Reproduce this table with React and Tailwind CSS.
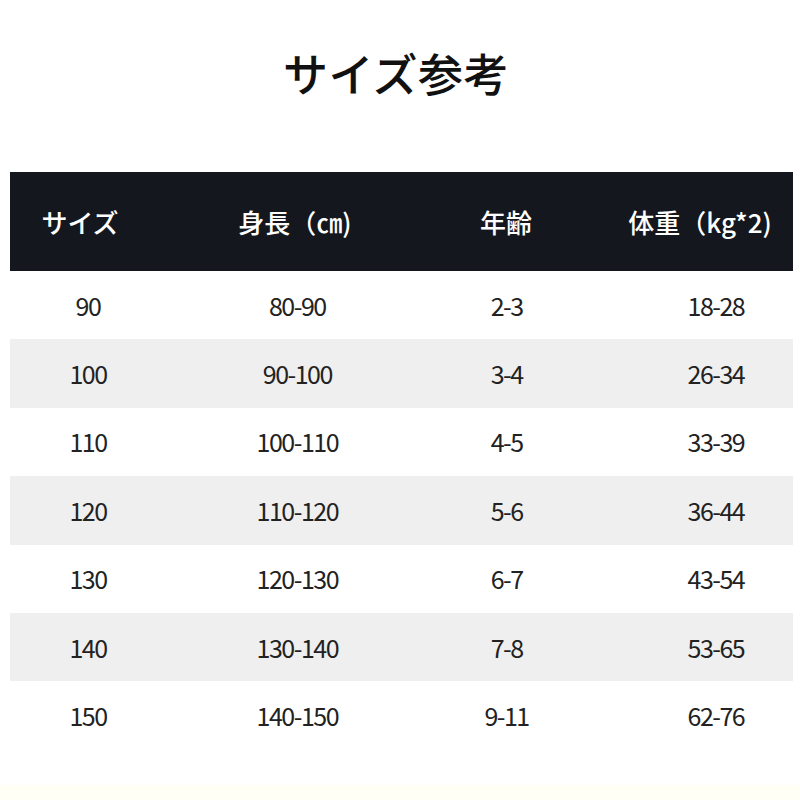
const rows = [
  ["90", "80-90", "2-3", "18-28"],
  ["100", "90-100", "3-4", "26-34"],
  ["110", "100-110", "4-5", "33-39"],
  ["120", "110-120", "5-6", "36-44"],
  ["130", "120-130", "6-7", "43-54"],
  ["140", "130-140", "7-8", "53-65"],
  ["150", "140-150", "9-11", "62-76"],
];

export default function App() {
  return (
    <div className="w-[800px] h-[800px] bg-white flex flex-col font-['Noto_Sans_CJK_JP',sans-serif] overflow-hidden">
      <div className="h-[144px] flex items-center justify-center">
        <h1 className="text-[45px] leading-none font-medium text-[#111] tracking-[0.5px] pr-[8px]">サイズ参考</h1>
      </div>
      <div className="h-[28px]" />

      <div className="mx-[10px] w-[783px] h-[99px] bg-[#15171e] flex items-center text-white text-[26px] font-medium leading-none">
        <div className="w-[140px] flex justify-center whitespace-nowrap">サイズ</div>
        <div className="w-[290px] flex justify-center whitespace-nowrap">身長（㎝)</div>
        <div className="w-[132px] flex justify-center whitespace-nowrap">年齢</div>
        <div className="ml-[35px] w-[186px] flex justify-center whitespace-nowrap">体重（kg*2)</div>
      </div>

      {rows.map((r, i) => (
        <div
          key={r[0]}
          className={
            "mx-[10px] w-[783px] h-[68.4px] grid grid-cols-[repeat(4,130px)] gap-x-[79.3px] pl-[13px] items-center text-[25px] leading-none text-[#222] tracking-[-1.5px] " +
            (i % 2 === 1 ? "bg-[#efefef]" : "bg-white")
          }
        >
          {r.map((c, j) => (
            <div key={j} className="flex justify-center whitespace-nowrap">{c}</div>
          ))}
        </div>
      ))}

      <div className="flex-1" />
      <div className="h-[15px] bg-[#fffff6]" />
    </div>
  );
}
